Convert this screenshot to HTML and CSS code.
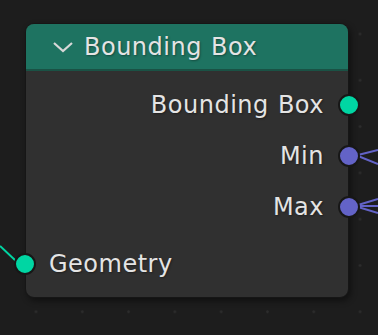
FILE: index.html
```html
<!DOCTYPE html>
<html lang="en">
<head>
    <meta charset="UTF-8">
    <title>Bounding Box Node</title>
    <link rel="stylesheet" href="styles.css">
</head>
<body>
    <div class="editor">
        <svg class="wires" width="378" height="335" viewBox="0 0 378 335">
            <path d="M0 246 L16 261" stroke="#00d6a3" stroke-width="2" fill="none"/>
            <g stroke="#6363c7" stroke-width="2" fill="none">
                <path d="M358 155 L378 150"/>
                <path d="M358 156 L378 164"/>
                <path d="M358 205 L378 199"/>
                <path d="M358 206 L378 206"/>
                <path d="M358 207 L378 213"/>
            </g>
        </svg>

        <div class="node">
            <div class="node-header">
                <svg class="chevron" width="22" height="12" viewBox="0 0 22 12">
                    <path d="M2 2 L11 10 L20 2" stroke="#d8d8d8" stroke-width="2.2" fill="none"/>
                </svg>
                <span>Bounding Box</span>
            </div>
            <div class="node-body">
                <div class="socket-row output">
                    <span>Bounding Box</span>
                    <div class="socket geometry"></div>
                </div>
                <div class="socket-row output">
                    <span>Min</span>
                    <div class="socket vector"></div>
                </div>
                <div class="socket-row output">
                    <span>Max</span>
                    <div class="socket vector"></div>
                </div>
                <div class="socket-row input">
                    <div class="socket geometry"></div>
                    <span>Geometry</span>
                </div>
            </div>
        </div>
    </div>
</body>
</html>
```

FILE: styles.css
```css
body {
    margin: 0;
    background: #1d1d1d;
    font-family: "DejaVu Sans", sans-serif;
    color: #e4e4e4;
}

.editor {
    position: relative;
    width: 378px;
    height: 335px;
    overflow: hidden;
    background-image: radial-gradient(circle, #2c2c2c 1px, transparent 1.6px);
    background-size: 46.3px 46.3px;
    background-position: 12.85px 10.85px;
}

.wires {
    position: absolute;
    left: 0;
    top: 0;
}

.node {
    position: absolute;
    left: 25px;
    top: 23px;
    width: 322px;
    height: 273px;
    background: #303030;
    border: 1px solid #161616;
    border-radius: 9px;
    box-shadow: 2px 3px 6px rgba(0, 0, 0, 0.45);
    display: flex;
    flex-direction: column;
    font-size: 24px;
    letter-spacing: 0.5px;
    word-spacing: 1px;
}

.node-header {
    height: 45px;
    background: #1e7361;
    border-bottom: 2px solid #1a5245;
    border-radius: 8px 8px 0 0;
    display: flex;
    align-items: center;
    gap: 10px;
    padding-left: 26px;
    text-shadow: 1px 1px 2px rgba(0, 0, 0, 0.35);
}

.chevron {
    margin-top: 1px;
}

.node-body {
    display: flex;
    flex-direction: column;
    padding-top: 8px;
}

.socket-row {
    position: relative;
    height: 51px;
    display: flex;
    align-items: center;
    text-shadow: 1px 1px 2px rgba(0, 0, 0, 0.35);
}

.socket-row.output {
    justify-content: flex-end;
    padding-right: 24px;
}

.socket-row.input {
    margin-top: 6px;
    padding-left: 23px;
}

.socket {
    position: absolute;
    width: 18px;
    height: 18px;
    border-radius: 50%;
    border: 2px solid #171717;
    top: 50%;
    margin-top: -11px;
}

.output .socket {
    right: -12px;
}

.input .socket {
    left: -12px;
}

.socket.geometry {
    background: #00d6a3;
}

.socket.vector {
    background: #6363c7;
}
```
